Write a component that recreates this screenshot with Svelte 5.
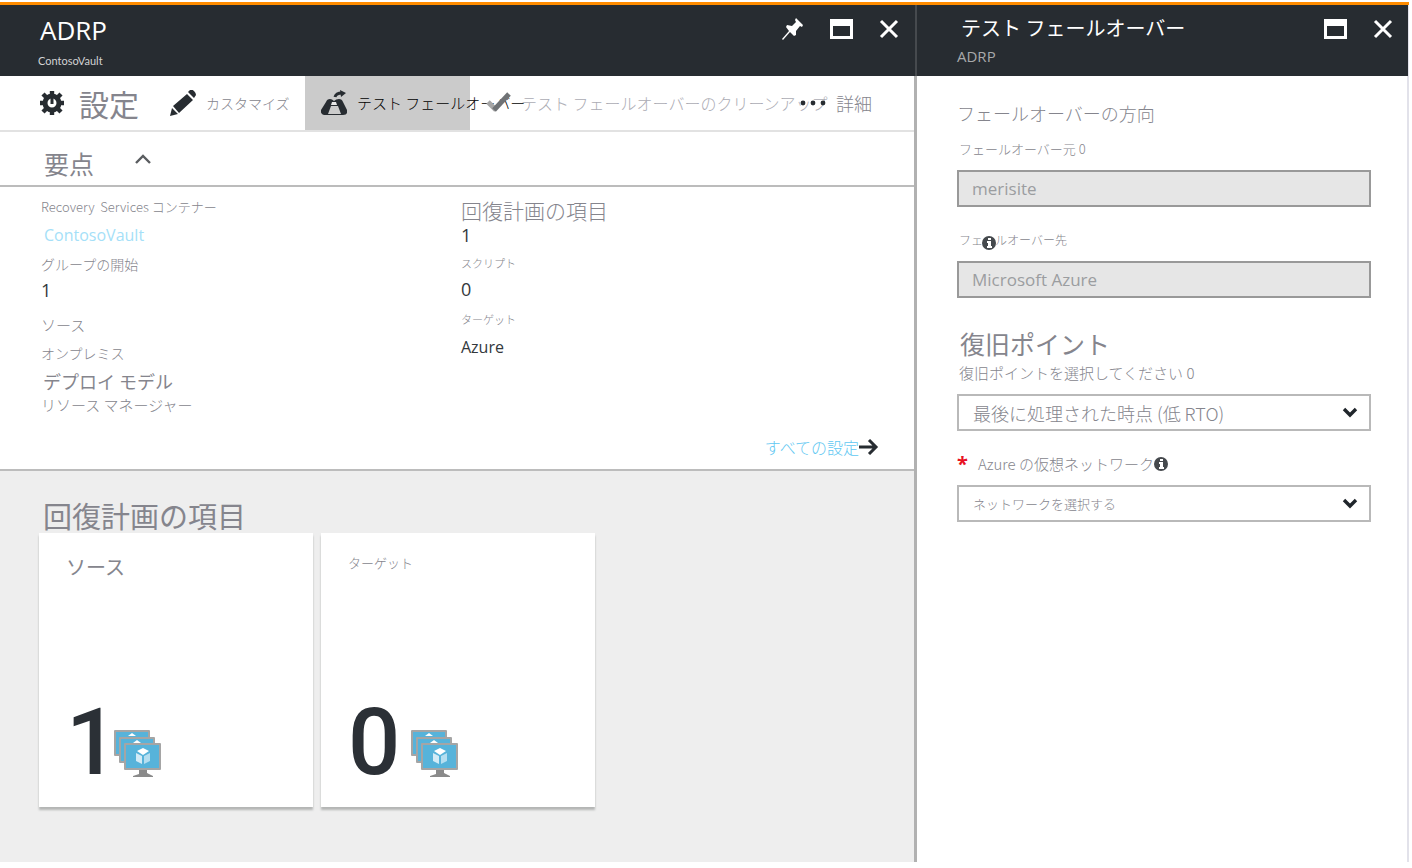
<script>
  const leftDetails = [
    { label: 'Recovery  Services コンテナー', size: 'small', value: 'ContosoVault', kind: 'link' },
    { label: 'グループの開始', size: 'normal', value: '1', kind: 'number' },
    { label: 'ソース', size: 'medium', value: 'オンプレミス', kind: 'text', spaced: true },
    { label: 'デプロイ モデル', size: 'large', value: 'リソース マネージャー', kind: 'long' }
  ];

  const rightDetails = [
    { label: '回復計画の項目', size: 'title', value: '1', kind: 'number' },
    { label: 'スクリプト', size: 'tiny', value: '0', kind: 'number' },
    { label: 'ターゲット', size: 'tiny', value: 'Azure', kind: 'latin' }
  ];

  const tiles = [
    { title: 'ソース', count: 1, size: 'big' },
    { title: 'ターゲット', count: 0, size: 'compact' }
  ];

  let recoveryPoint = 'latest';
  let network = '';
</script>

{#snippet maximizeIcon()}
  <svg width="23" height="20" viewBox="0 0 23 20" aria-hidden="true">
    <path fill="#fff" fill-rule="evenodd" d="M0 0h23v20H0zM3 7v10h17V7z" />
  </svg>
{/snippet}

{#snippet closeIcon()}
  <svg width="20" height="20" viewBox="0 0 20 20" aria-hidden="true">
    <path d="M2 2l16 16M18 2L2 18" stroke="#fff" stroke-width="3" fill="none" />
  </svg>
{/snippet}

{#snippet infoIcon()}
  <svg width="14" height="14" viewBox="0 0 14 14" aria-hidden="true">
    <circle cx="7" cy="7" r="7" fill="#45494d" />
    <path d="M6 2h3v2H6zM5 5h4v5h1v2H5v-2h1V7H5z" fill="#fff" />
  </svg>
{/snippet}

{#snippet chevronDown()}
  <svg class="chevron" width="16" height="11" viewBox="0 0 16 11" aria-hidden="true">
    <path d="M2 2l6 6 6-6" stroke="#20262b" stroke-width="3.4" fill="none" />
  </svg>
{/snippet}

{#snippet details(items)}
  {#each items as item}
    <div class="detail" class:spaced={item.spaced}>
      <dt class={item.size}>{item.label}</dt>
      <dd class={item.kind}>
        {#if item.kind === 'link'}
          <a href="#vault">{item.value}</a>
        {:else}
          {item.value}
        {/if}
      </dd>
    </div>
  {/each}
{/snippet}

{#snippet machinesIcon()}
  <svg width="50" height="50" viewBox="0 0 50 50" aria-hidden="true">
    <rect x="1" y="2" width="36" height="26" rx="1" fill="#a5a5a5" />
    <path fill="#57b3da" d="M3 4h32v22H3z" />
    <path fill="#fff" d="M15 8l4-3 4 3z" />
    <rect x="6" y="9" width="36" height="26" rx="1" fill="#a5a5a5" />
    <path fill="#57b3da" d="M8 11h32v22H8z" />
    <path fill="#fff" d="M20 15l4-3 4 3z" />
    <path fill="#8a8a8a" d="M26 40h8v5l6 3v1H20v-1l6-2z" />
    <rect x="11" y="15" width="37" height="27" rx="1" fill="#a5a5a5" />
    <path fill="#57b3da" d="M13 17h33v23H13z" />
    <path fill="#fff" d="M30 20l6 3-6 4-6-4z" />
    <path fill="#d3ebf6" d="M23 25l6 3v8l-6-3z" />
    <path fill="#b5def0" d="M37 25l-6 3v8l6-3z" />
  </svg>
{/snippet}

<div class="portal">
  <main class="blade">
    <header>
      <div>
        <h1>ADRP</h1>
        <p class="vault">ContosoVault</p>
      </div>
      <div class="window-actions">
        <button type="button" aria-label="ピン留め">
          <svg width="22" height="22" viewBox="0 0 22 22" aria-hidden="true">
            <path fill="#fff" d="M14 0l7 7-1 2-2-1-4 5 0 4-2 1-4-4-7 8-1-1 7-8-3-4 1-2 5 1 4-4-1-2z" />
          </svg>
        </button>
        <button type="button" aria-label="最大化">{@render maximizeIcon()}</button>
        <button type="button" aria-label="閉じる">{@render closeIcon()}</button>
      </div>
    </header>

    <nav class="toolbar">
      <button type="button" class="settings">
        <svg width="26" height="26" viewBox="0 0 26 26" aria-hidden="true">
          <circle cx="13" cy="13" r="7" fill="none" stroke="#272c31" stroke-width="5" />
          <path
            d="M13 1v4M13 21v4M1 13h4M21 13h4M4 4l4 4M18 18l4 4M22 4l-4 4M8 18l-4 4"
            stroke="#272c31"
            stroke-width="4.4"
          />
          <path d="M13 7v7" stroke="#272c31" stroke-width="3" />
        </svg>
        <span>設定</span>
      </button>
      <button type="button" class="customize">
        <svg width="26" height="26" viewBox="0 0 26 26" aria-hidden="true">
          <path fill="#272c31" d="M0 26l2-8 6 6zM3 16L17 4l6 6L9 23zM18 2l2-2q2-1 4 1t2 4l-2 3z" />
        </svg>
        <span>カスタマイズ</span>
      </button>
      <button type="button" class="failover">
        <svg width="26" height="26" viewBox="0 0 26 26" aria-hidden="true">
          <path
            fill="#272c31"
            d="M5 12q1-3 4-3 2 0 4 2 2-2 5-2 3 0 4 3l4 8q1 5-4 5H5q-6 0-5-5z"
          />
          <path fill="#e8e8e8" d="M11 12h4l1 3h-6z" />
          <path fill="#cbcbcb" d="M10 16h7l3 8H7z" />
          <path d="M14 7q1-4 7-4" fill="none" stroke="#272c31" stroke-width="3" />
          <path fill="#272c31" d="M19 0l6 3-5 4z" />
        </svg>
        <span>テスト フェールオーバー</span>
      </button>
      <button type="button" class="cleanup" disabled>
        <svg width="25" height="22" viewBox="0 0 25 22" aria-hidden="true">
          <path d="M2 10l8 8" stroke="#a6a6a6" stroke-width="5" />
          <path d="M8 18L23 2" stroke="#6f7275" stroke-width="5" />
        </svg>
        <span>テスト フェールオーバーのクリーンアップ</span>
      </button>
      <button type="button" class="more">
        <svg width="26" height="6" viewBox="0 0 26 6" aria-hidden="true">
          <circle cx="3" cy="3" r="2.4" fill="#272c31" />
          <circle cx="13" cy="3" r="2.4" fill="#272c31" />
          <circle cx="23" cy="3" r="2.4" fill="#272c31" />
        </svg>
        <span>詳細</span>
      </button>
    </nav>

    <section class="essentials">
      <button type="button" class="essentials-toggle" aria-expanded="true">
        <span>要点</span>
        <svg width="18" height="12" viewBox="0 0 18 12" aria-hidden="true">
          <path d="M2 10l7-7 7 7" stroke="#5a5d60" stroke-width="2.4" fill="none" />
        </svg>
      </button>
      <div class="detail-columns">
        <dl>{@render details(leftDetails)}</dl>
        <dl>{@render details(rightDetails)}</dl>
      </div>
      <a class="all-settings" href="#settings">
        すべての設定
        <svg width="20" height="16" viewBox="0 0 20 16" aria-hidden="true">
          <path d="M0 8h17M10 1l7 7-7 7" stroke="#272c31" stroke-width="3" fill="none" />
        </svg>
      </a>
    </section>

    <section class="items">
      <h2>回復計画の項目</h2>
      <div class="tiles">
        {#each tiles as tile}
          <article class="tile {tile.size}">
            <h3>{tile.title}</h3>
            <div class="tile-total">
              <span class="count">{tile.count}</span>
              {@render machinesIcon()}
            </div>
          </article>
        {/each}
      </div>
    </section>
  </main>

  <aside class="blade">
    <header>
      <div>
        <h1>テスト フェールオーバー</h1>
        <p>ADRP</p>
      </div>
      <div class="window-actions">
        <button type="button" aria-label="最大化">{@render maximizeIcon()}</button>
        <button type="button" aria-label="閉じる">{@render closeIcon()}</button>
      </div>
    </header>

    <form>
      <h2 class="direction">フェールオーバーの方向</h2>
      <div class="field">
        <label class="from" for="failover-from">フェールオーバー元 0</label>
        <input id="failover-from" type="text" value="merisite" disabled />
      </div>
      <div class="field">
        <label class="to" for="failover-to">
          フェールオーバー先
          <span class="info-over">{@render infoIcon()}</span>
        </label>
        <input id="failover-to" type="text" value="Microsoft Azure" disabled />
      </div>
      <h2 class="recovery">復旧ポイント</h2>
      <div class="field">
        <label for="recovery-point">復旧ポイントを選択してください 0</label>
        <div class="select">
          <select id="recovery-point" class="point" bind:value={recoveryPoint}>
            <option value="latest">最後に処理された時点 (低 RTO)</option>
          </select>
          {@render chevronDown()}
        </div>
      </div>
      <div class="field">
        <label class="network" for="network">
          <span class="required">*</span>
          Azure の仮想ネットワーク{@render infoIcon()}
        </label>
        <div class="select">
          <select id="network" bind:value={network}>
            <option value="">ネットワークを選択する</option>
          </select>
          {@render chevronDown()}
        </div>
      </div>
    </form>
  </aside>
</div>

<style>
  :global(body) {
    margin: 0;
    background: #fff;
    color: #85858d;
    font-family: 'Noto Sans CJK JP', 'Open Sans', sans-serif;
    font-weight: 300;
  }

  :global(*) {
    box-sizing: border-box;
  }

  h1,
  h2,
  h3,
  p,
  dl,
  dd {
    margin: 0;
    font-weight: 300;
  }

  button {
    border: 0;
    padding: 0;
    background: none;
    color: inherit;
    font: inherit;
    white-space: nowrap;
  }

  a {
    color: #5fc8f2;
    text-decoration: none;
  }

  svg {
    display: block;
    flex: none;
  }

  .portal {
    display: grid;
    grid-template-columns: 917fr 492fr;
    min-height: calc(100vh - 8px);
    margin: 2px 3px 6px 0;
    border-top: 3px solid #ff8c00;
  }

  .blade {
    display: flex;
    flex-direction: column;
    min-width: 0;
  }

  main.blade {
    border-right: 3px solid #b1b1b1;
  }

  aside.blade {
    border-right: 2px solid #e2e2ea;
  }

  header {
    display: flex;
    justify-content: space-between;
    height: 71px;
    padding: 10px 15px 0 38px;
    background: #272c31;
    color: #fff;
  }

  main header {
    margin-right: -3px;
    padding-right: 16px;
    border-right: 2px solid #464a4e;
  }

  header h1 {
    padding-left: 2px;
    font-family: 'Open Sans', sans-serif;
    font-size: 26px;
    font-weight: 400;
    line-height: 30px;
  }

  header p {
    font-family: 'Open Sans', sans-serif;
    font-size: 15px;
    font-weight: 400;
    line-height: 30px;
    color: #a7a9ab;
  }

  header .vault {
    font-family: Lato, sans-serif;
    font-size: 11px;
    line-height: 32px;
    color: #d2d3d4;
  }

  aside header {
    margin-right: -1px;
    padding-left: 40px;
  }

  aside header h1 {
    padding-left: 4px;
    font-family: 'Noto Sans CJK JP', sans-serif;
    font-size: 20px;
    line-height: 26px;
  }

  .window-actions {
    display: flex;
    align-items: center;
    gap: 26px;
    height: 28px;
  }

  .toolbar {
    display: flex;
    height: 56px;
    border-bottom: 2px solid #e2e2e2;
  }

  .toolbar button {
    display: flex;
    align-items: center;
    gap: 10px;
    flex: none;
    padding-left: 16px;
    line-height: 40px;
  }

  .toolbar .settings {
    width: 154px;
    gap: 14px;
    padding-left: 39px;
    font-size: 30px;
    font-weight: 400;
    line-height: 46px;
  }

  .toolbar .customize {
    width: 151px;
    font-size: 14px;
  }

  .toolbar .failover {
    width: 165px;
    background: #cbcbcb;
    color: #000;
    font-size: 15px;
  }

  .toolbar .cleanup {
    width: 314px;
    color: #acacb4;
    font-size: 16px;
  }

  .toolbar .more {
    font-size: 18px;
  }

  .essentials {
    border-bottom: 2px solid #bcbcbc;
  }

  .essentials-toggle {
    display: flex;
    align-items: center;
    gap: 40px;
    width: 100%;
    height: 55px;
    padding-left: 44px;
    border-bottom: 2px solid #bcbcbc;
    font-size: 25px;
    font-weight: 400;
    line-height: 46px;
  }

  .essentials-toggle span {
    padding-top: 8px;
  }

  .detail-columns {
    display: grid;
    grid-template-columns: 420fr 453fr;
    min-height: 248px;
    padding: 6px 0 0 41px;
  }

  dl {
    line-height: 28px;
  }

  dt {
    white-space: pre;
  }

  .spaced {
    padding-top: 5px;
  }

  dd,
  .normal {
    font-size: 14px;
  }

  .small {
    font-size: 13px;
  }

  .tiny {
    font-size: 11px;
  }

  .medium,
  .long {
    font-size: 15px;
  }

  .large {
    padding-left: 2px;
    font-size: 18px;
    font-weight: 400;
  }

  .long {
    line-height: 20px;
  }

  .title {
    font-size: 21px;
    line-height: 34px;
  }

  .number,
  .latin,
  .link {
    color: #33383c;
    font-family: 'Open Sans', sans-serif;
    font-weight: 400;
  }

  .number {
    padding-bottom: 4px;
    font-size: 18px;
    line-height: 24px;
  }

  .title + .number {
    padding-bottom: 6px;
    line-height: 16px;
  }

  .latin {
    font-size: 16px;
  }

  .link a {
    padding-left: 3px;
    color: #a5dff8;
    font-size: 16px;
  }

  .all-settings {
    display: flex;
    align-items: center;
    justify-content: flex-end;
    height: 24px;
    margin: 0 35px 10px 0;
    font-size: 16px;
    line-height: 24px;
  }

  .items {
    flex: 1;
    padding: 26px 39px 54px;
    background: #eee;
  }

  .items h2 {
    padding-left: 4px;
    font-size: 29px;
    font-weight: 400;
    line-height: 36px;
  }

  .tiles {
    display: flex;
    gap: 8px;
  }

  .tile {
    display: flex;
    flex-direction: column;
    justify-content: space-between;
    width: 274px;
    height: 274px;
    padding: 14px 27px 18px;
    background: #fff;
    box-shadow: 0 3px 2px #b4b6b5;
  }

  .tile h3 {
    font-size: 13px;
    line-height: 32px;
  }

  .tile.big h3 {
    font-size: 20px;
    font-weight: 400;
    line-height: 40px;
  }

  .tile-total {
    display: flex;
    align-items: flex-end;
    padding-bottom: 11px;
  }

  .count {
    width: 62px;
    color: #2b3036;
    font-family: Roboto, sans-serif;
    font-size: 92px;
    font-weight: 500;
    line-height: 70px;
  }

  .big .count {
    width: 47px;
  }

  form {
    padding: 23px 36px 0 40px;
  }

  .direction {
    font-size: 18px;
    line-height: 28px;
  }

  .recovery {
    margin-top: 27px;
    padding-left: 3px;
    font-size: 25px;
    font-weight: 400;
    line-height: 36px;
  }

  .field {
    margin-top: 21px;
  }

  .direction + .field {
    margin-top: 10px;
  }

  .recovery + .field {
    margin-top: 0;
  }

  label {
    display: flex;
    align-items: center;
    height: 24px;
    margin-bottom: 9px;
    padding-left: 2px;
    font-size: 15px;
    line-height: 24px;
  }

  .from {
    font-size: 13px;
  }

  .to {
    position: relative;
    font-size: 12px;
  }

  .network {
    padding-left: 0;
  }

  .info-over {
    position: absolute;
    top: 8px;
    left: 25px;
  }

  .required {
    width: 21px;
    color: #e81123;
    font-family: 'Open Sans', sans-serif;
    font-size: 20px;
    font-weight: 700;
  }

  input,
  select {
    display: block;
    width: 100%;
    height: 37px;
    padding: 0 14px;
    border: 2px solid #b9b9b9;
    border-radius: 0;
    appearance: none;
    background: #fff;
    color: #85858d;
    font: inherit;
    font-size: 13px;
  }

  input {
    padding: 0 13px;
    border-color: #999;
    background: #e6e6e6;
    color: #9b9da0;
    font-family: 'Open Sans', sans-serif;
    font-size: 17px;
    font-weight: 400;
  }

  .point {
    font-size: 18px;
  }

  .select {
    position: relative;
  }

  .chevron {
    position: absolute;
    top: 13px;
    right: 13px;
    pointer-events: none;
  }
</style>
